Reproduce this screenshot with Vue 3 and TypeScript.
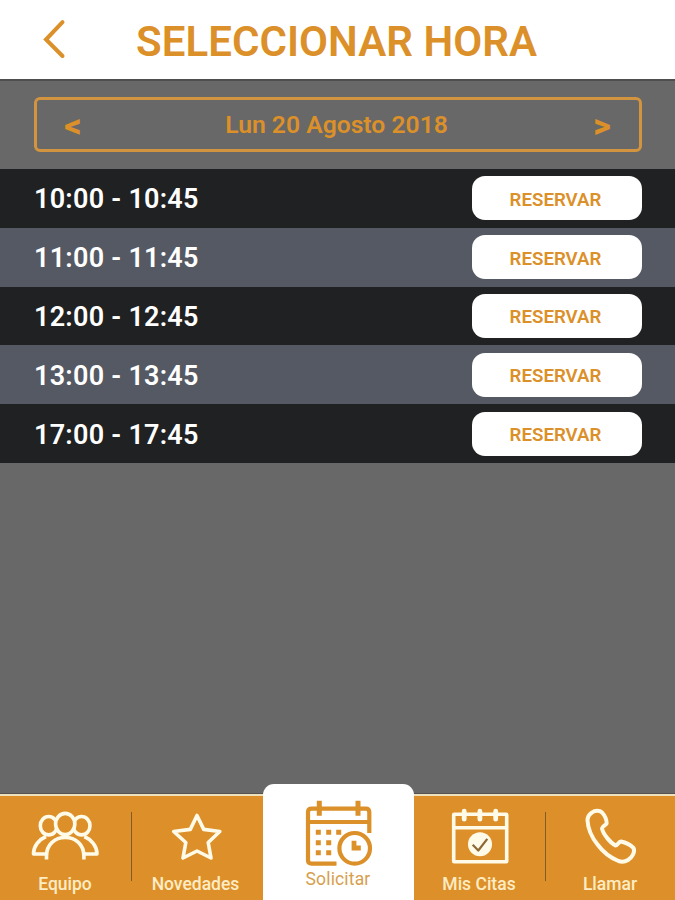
<script setup lang="ts">
import { ref } from 'vue'

interface Slot {
  start: string
  end: string
}

const slots: Slot[] = [
  { start: '10:00', end: '10:45' },
  { start: '11:00', end: '11:45' },
  { start: '12:00', end: '12:45' },
  { start: '13:00', end: '13:45' },
  { start: '17:00', end: '17:45' },
]

const day = ref('Lun 20 Agosto 2018')
</script>

<template>
  <div class="screen">
    <header class="header">
      <button class="back" aria-label="Volver">
        <svg width="24" height="42" viewBox="0 0 24 42">
          <path d="M20.500 3.200L4 20.500L20.500 37" />
        </svg>
      </button>
      <h1 class="title">SELECCIONAR HORA</h1>
    </header>

    <section class="picker">
      <div class="date">
        <button class="step">&lt;</button>
        <span class="day">{{ day }}</span>
        <button class="step">&gt;</button>
      </div>
    </section>

    <main class="slots">
      <div v-for="slot in slots" :key="slot.start" class="slot">
        <span class="time">{{ slot.start }} - {{ slot.end }}</span>
        <button class="reserve">RESERVAR</button>
      </div>
    </main>

    <nav class="nav">
      <a class="tab divided">
        <svg class="icon" viewBox="0 0 72 60">
          <ellipse cx="19.7" cy="19.7" rx="8.4" ry="9.2" />
          <ellipse cx="52.6" cy="19.7" rx="8.4" ry="9.2" />
          <path d="M17 30.5C10 33.500 4.500 40 4.500 48H16.500M55.300 30.500C62.300 33.500 68 40 68 48H55.500" />
          <ellipse class="front" cx="36.2" cy="18" rx="9.6" ry="10.600" />
          <path class="front" d="M17.500 53.500V50C17.500 38.500 26 31.500 36.200 31.500S54.900 38.500 54.900 50V53.500" />
        </svg>
        <span class="label">Equipo</span>
      </a>
      <a class="tab news">
        <svg class="icon" viewBox="0 0 72 60">
          <path d="M37 9.500L43.700 23.400L59.800 25.500L48.200 36.500L51 52L37 45L23 52L25.800 36.500L13.700 25.500L30.300 23.400Z" />
        </svg>
        <span class="label">Novedades</span>
      </a>
      <a class="tab active">
        <svg class="icon-active" viewBox="0 0 72 72">
          <path d="M34.500 66.700H9.500Q6 66.700 6 63.200V15.200Q6 11.700 9.500 11.700H63.800Q67.300 11.700 67.300 15.200V36M6 25H67.300" />
          <path class="ring" d="M17.300 3.700V18.700M56 3.700V18.700" />
          <circle cx="52.700" cy="51.300" r="15.300" />
          <path class="hands" d="M52 43.700V51H58.800" />
          <path class="dots" d="M13.800 35.300h5M24.200 35.300h5M34.200 35.300h5M13.800 45.700h5M24.200 45.700h5M13.800 55.700h5M24.200 55.700h5" />
        </svg>
        <span class="label">Solicitar</span>
      </a>
      <a class="tab divided">
        <svg class="icon" viewBox="0 0 72 60">
          <rect x="10.700" y="8.200" width="53" height="47.500" rx="0.500" />
          <path d="M10.700 21.700H63.700" />
          <path class="pins" d="M21.200 5.200V13.200M36.900 5.200V13.200M52.700 5.200V13.200" />
          <circle class="badge" cx="37" cy="38.200" r="12" />
          <path class="check" d="M29.700 38.700L35.300 44.500L44.300 32.900" />
        </svg>
        <span class="label">Mis Citas</span>
      </a>
      <a class="tab call">
        <svg class="icon" viewBox="0 0 72 60">
          <path class="phone" d="M18 6.500C21 4.200 25.500 4 28 6.500C30.800 9.500 32.800 14 32.600 17.500C31.500 19.500 28 20.500 28 22.500C29 28 36.500 37 41.500 39.500C43.500 39.500 44.500 35.800 47 35.500C51 36.300 56 38.500 59.500 42C61.500 46 58 51.500 54 54C51 55.800 47.500 56 44.500 55C37 52 29 46 23.500 38.500C17.500 31 14 23 13.500 14.500C13.500 11 15 8.500 18 6.500Z" />
        </svg>
        <span class="label">Llamar</span>
      </a>
    </nav>
  </div>
</template>

<style>
body {
  margin: 0;
  background: #686868;
}
</style>

<style scoped>
.screen {
  display: flex;
  flex-direction: column;
  width: 675px;
  height: 900px;
  overflow: hidden;
  background: #686868;
  color: #dc9029;
  font-family: Roboto, "Liberation Sans", sans-serif;
}

button {
  margin: 0;
  padding: 0;
  border: 0;
  background: none;
  color: inherit;
  font: inherit;
}

.header {
  display: flex;
  align-items: center;
  box-sizing: border-box;
  height: 79px;
  padding: 1px 0 0 42px;
  background: #fff;
}

.back {
  width: 94px;
  height: 42px;
  text-align: left;
}

.back svg {
  display: block;
  fill: none;
  stroke: #dc9029;
  stroke-width: 4;
  stroke-linecap: round;
}

.title {
  margin: 4px 0 0;
  font-size: 42px;
  line-height: 48px;
  font-weight: 600;
  letter-spacing: 0.05px;
  white-space: nowrap;
}

.picker {
  box-sizing: border-box;
  height: 90px;
  padding: 16px 33px 0 34px;
  border-top: 2px solid #4e4e4e;
}

.date {
  display: flex;
  align-items: center;
  justify-content: space-between;
  box-sizing: border-box;
  height: 55px;
  padding: 0 28px 0 27px;
  border: 3px solid #d3943f;
  border-radius: 6px;
  font-size: 24.7px;
  font-weight: 600;
}

.day {
  margin-right: 2px;
}

.step {
  width: 18px;
  font-size: 34px;
  line-height: 34px;
  font-weight: 800;
}

.slot {
  display: flex;
  align-items: center;
  justify-content: space-between;
  box-sizing: border-box;
  height: 58.8px;
  padding: 0 33px 0 34px;
  background: #202122;
}

.slot:nth-child(even) {
  background: #555963;
}

.time {
  padding-top: 2px;
  color: #fff;
  font-size: 27px;
  font-weight: 600;
  letter-spacing: 0.25px;
}

.reserve {
  width: 170px;
  height: 44px;
  padding: 3px 3px 0 0;
  border-radius: 13px;
  background: #fff;
  font-size: 18.7px;
  font-weight: 600;
}

.nav {
  display: grid;
  grid-template-columns: 132px 131px 151px 132px 129px;
  grid-template-rows: 106px;
  align-items: end;
  box-sizing: border-box;
  height: 107px;
  margin-top: auto;
  border-top: 1px solid #55534f;
  background: linear-gradient(#efe0bd 2px, #dd9029 2px);
}

.tab {
  display: flex;
  flex-direction: column;
  align-items: center;
  position: relative;
  box-sizing: border-box;
  height: 94px;
  padding-right: 2px;
  color: #fdecc4;
}

.news {
  padding-right: 4px;
}

.call {
  padding-right: 1px;
}

.divided::after {
  content: "";
  position: absolute;
  top: 6px;
  right: 0;
  width: 1.5px;
  height: 69px;
  background: #805c2b;
}

.icon {
  width: 72px;
  height: 60px;
  fill: none;
  stroke: #fffbe8;
  stroke-width: 3.6;
  stroke-linejoin: round;
}

.front {
  fill: #dd9029;
}

.pins {
  stroke-width: 4.8;
  stroke-linecap: round;
}

.badge {
  fill: #fffbe8;
  stroke: none;
}

.check {
  stroke: #8d6936;
  stroke-width: 2.2;
}

.phone {
  stroke-width: 4;
}

.label {
  margin-top: 8px;
  font-size: 17.5px;
  line-height: 21px;
  font-weight: 500;
  white-space: nowrap;
}

.active {
  height: 116px;
  padding-right: 1px;
  border-radius: 11px 11px 0 0;
  background: #fff;
  color: #d6a04e;
}

.active .label {
  margin-top: 0;
  font-weight: 400;
  letter-spacing: 0.15px;
}

.icon-active {
  width: 72px;
  height: 72px;
  margin-top: 13px;
  fill: none;
  stroke: #dc9029;
  stroke-width: 4.2;
}

.ring {
  stroke-width: 5;
}

.hands {
  stroke-width: 4.8;
}

.dots {
  stroke-width: 5;
}
</style>
